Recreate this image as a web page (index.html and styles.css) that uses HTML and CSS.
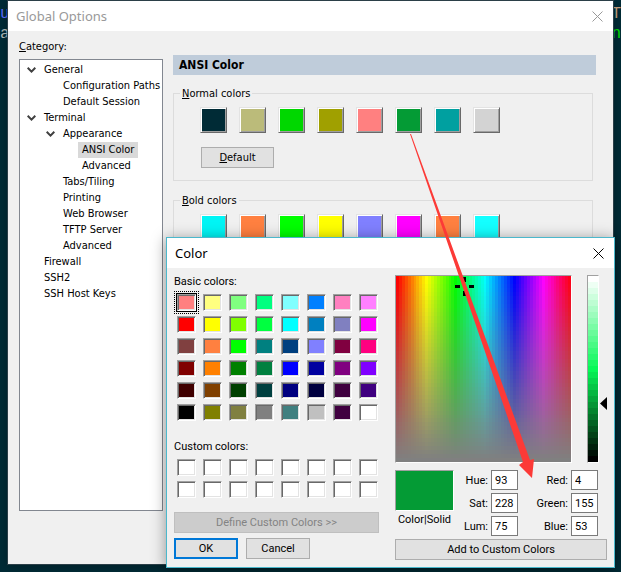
FILE: index.html
```html
<!DOCTYPE html>
<html lang="en">
<head>
    <meta charset="UTF-8">
    <meta name="viewport" content="width=device-width, initial-scale=1.0">
    <title>Global Options</title>
    <link rel="stylesheet" href="styles.css">
</head>
<body>
    <div class="terminal">
        <div class="terminal-line"><span class="blue">u</span><span class="tan">T</span></div>
        <div class="terminal-line"><span class="grey">a</span><span class="green">n</span></div>
    </div>

    <section class="window options">
        <header class="titlebar inactive">
            <h1>Global Options</h1>
            <button class="close" aria-label="Close">
                <svg width="11" height="11" viewBox="0 0 11 11"><path d="M0.5 0.5L10.5 10.5M10.5 0.5L0.5 10.5"/></svg>
            </button>
        </header>
        <div class="options-body">
            <nav class="category">
                <p class="category-label"><u>C</u>ategory:</p>
                <ul class="tree">
                    <li>
                        <div class="row"><button class="toggle" aria-label="Collapse"><svg width="9" height="6" viewBox="0 0 9 6"><path d="M0.7 0.8L4.5 4.6L8.3 0.8"/></svg></button><span>General</span></div>
                        <ul>
                            <li class="row"><span>Configuration Paths</span></li>
                            <li class="row"><span>Default Session</span></li>
                        </ul>
                    </li>
                    <li>
                        <div class="row"><button class="toggle" aria-label="Collapse"><svg width="9" height="6" viewBox="0 0 9 6"><path d="M0.7 0.8L4.5 4.6L8.3 0.8"/></svg></button><span>Terminal</span></div>
                        <ul>
                            <li>
                                <div class="row"><button class="toggle" aria-label="Collapse"><svg width="9" height="6" viewBox="0 0 9 6"><path d="M0.7 0.8L4.5 4.6L8.3 0.8"/></svg></button><span>Appearance</span></div>
                                <ul>
                                    <li class="row"><span class="selected">ANSI Color</span></li>
                                    <li class="row"><span>Advanced</span></li>
                                </ul>
                            </li>
                            <li class="row"><span>Tabs/Tiling</span></li>
                            <li class="row"><span>Printing</span></li>
                            <li class="row"><span>Web Browser</span></li>
                            <li class="row"><span>TFTP Server</span></li>
                            <li class="row"><span>Advanced</span></li>
                        </ul>
                    </li>
                    <li class="row"><span>Firewall</span></li>
                    <li class="row"><span>SSH2</span></li>
                    <li class="row"><span>SSH Host Keys</span></li>
                </ul>
            </nav>
            <div class="panel">
                <h2>ANSI Color</h2>
                <fieldset>
                    <legend><u>N</u>ormal colors</legend>
                    <div class="ansi" id="normalColors"></div>
                    <button class="btn default-btn"><u>D</u>efault</button>
                </fieldset>
                <fieldset>
                    <legend><u>B</u>old colors</legend>
                    <div class="ansi" id="boldColors"></div>
                    <button class="btn default-btn">D<u>e</u>fault</button>
                </fieldset>
            </div>
        </div>
    </section>

    <section class="window picker">
        <header class="titlebar">
            <h1>Color</h1>
            <button class="close" aria-label="Close">
                <svg width="11" height="11" viewBox="0 0 11 11"><path d="M0.5 0.5L10.5 10.5M10.5 0.5L0.5 10.5"/></svg>
            </button>
        </header>
        <div class="picker-body">
            <div class="palettes">
                <h2>Basic colors:</h2>
                <div class="palette basic" id="basicColors"></div>
                <h2>Custom colors:</h2>
                <div class="palette" id="customColors"></div>
                <button class="btn define" disabled>Define Custom Colors &gt;&gt;</button>
                <div class="actions">
                    <button class="btn primary">OK</button>
                    <button class="btn">Cancel</button>
                </div>
            </div>
            <div class="mixer">
                <div class="fields">
                    <div class="spectrum">
                        <canvas id="spectrum" width="60" height="47"></canvas>
                        <svg class="cross" width="19" height="19" viewBox="0 0 19 19"><path d="M8 0h3v5h-3zM8 14h3v5h-3zM0 8h5v3h-5zM14 8h5v3h-5z"/></svg>
                    </div>
                    <canvas id="luminosity" width="1" height="31"></canvas>
                    <svg class="pointer" width="7" height="13" viewBox="0 0 7 13"><path d="M7 0v13L0 6.5z"/></svg>
                </div>
                <div class="values">
                    <div class="preview">
                        <div class="preview-color"></div>
                        <span>Color|Solid</span>
                    </div>
                    <div class="numbers hsl">
                        <label for="hue">Hue:</label><input id="hue" type="text" value="93">
                        <label for="sat">Sat:</label><input id="sat" type="text" value="228">
                        <label for="lum">Lum:</label><input id="lum" type="text" value="75">
                    </div>
                    <div class="numbers rgb">
                        <label for="red">Red:</label><input id="red" type="text" value="4">
                        <label for="green">Green:</label><input id="green" type="text" value="155">
                        <label for="blue">Blue:</label><input id="blue" type="text" value="53">
                    </div>
                </div>
                <button class="btn add">Add to Custom Colors</button>
            </div>
        </div>
    </section>

    <svg class="arrow" width="126" height="344" viewBox="0 0 126 344">
        <path d="M0 0L113 328L109 331L122 344L124 325L120 326L1 0z"/>
    </svg>

    <script>
        const normal = ['#002b36', '#bbbb7a', '#00d700', '#a0a000', '#ff8080', '#049b35', '#00a0a0', '#d3d3d3'];
        const bold = ['#00f5f5', '#ff8040', '#00ff00', '#ffff00', '#8080ff', '#ff00ff', '#ff8040', '#14ffff'];
        const basic = [
            '#ff8080', '#ffff80', '#80ff80', '#00ff80', '#80ffff', '#0080ff', '#ff80c0', '#ff80ff',
            '#ff0000', '#ffff00', '#80ff00', '#00ff40', '#00ffff', '#0080c0', '#8080c0', '#ff00ff',
            '#804040', '#ff8040', '#00ff00', '#008080', '#004080', '#8080ff', '#800040', '#ff0080',
            '#800000', '#ff8000', '#008000', '#008040', '#0000ff', '#0000a0', '#800080', '#8000ff',
            '#400000', '#804000', '#004000', '#004040', '#000080', '#000040', '#400040', '#400080',
            '#000000', '#808000', '#808040', '#808080', '#408080', '#c0c0c0', '#400040', '#ffffff'
        ];
        const custom = new Array(16).fill('#ffffff');

        function fill(id, colors) {
            const box = document.getElementById(id);
            colors.forEach(function(color) {
                const button = document.createElement('button');
                button.className = 'swatch';
                button.style.backgroundColor = color;
                button.setAttribute('aria-label', color);
                box.appendChild(button);
            });
        }

        fill('normalColors', normal);
        fill('boldColors', bold);
        fill('basicColors', basic);
        fill('customColors', custom);
        document.querySelector('#basicColors .swatch').classList.add('current');

        // hue runs left to right, saturation falls from top to bottom
        function drawSpectrum() {
            const canvas = document.getElementById('spectrum');
            const ctx = canvas.getContext('2d');
            for (let x = 0; x < canvas.width; x++) {
                for (let y = 0; y < canvas.height; y++) {
                    const hue = x * 360 / canvas.width;
                    const sat = 100 - y * 100 / (canvas.height - 1);
                    ctx.fillStyle = 'hsl(' + hue + ', ' + sat + '%, 50%)';
                    ctx.fillRect(x, y, 1, 1);
                }
            }
        }

        function drawLuminosity() {
            const canvas = document.getElementById('luminosity');
            const ctx = canvas.getContext('2d');
            for (let y = 0; y < canvas.height; y++) {
                const lum = 100 - y * 100 / (canvas.height - 1);
                ctx.fillStyle = 'hsl(140, 95%, ' + lum + '%)';
                ctx.fillRect(0, y, 1, 1);
            }
        }

        drawSpectrum();
        drawLuminosity();
    </script>
</body>
</html>
```
FILE: styles.css
```css
* {
    margin: 0;
    padding: 0;
    box-sizing: border-box;
}

body {
    position: relative;
    height: 100vh;
    overflow: hidden;
    background-color: #002b36;
    color: #000;
    font-family: "DejaVu Sans Condensed", "DejaVu Sans", sans-serif;
    font-size: 11px;
}

h1, h2 {
    font-weight: normal;
}

ul {
    list-style: none;
}

button, input {
    font: inherit;
    color: inherit;
}

.terminal {
    padding-top: 4px;
    font-family: "Liberation Mono", monospace;
    font-size: 16px;
}

.terminal-line {
    display: flex;
    justify-content: space-between;
    height: 20px;
    line-height: 20px;
}

.blue { color: #5c6cff; }
.tan { color: #c8a080; }
.grey { color: #b0b8b8; }
.green { color: #00e000; }

.window {
    position: absolute;
    display: flex;
    flex-direction: column;
    background-color: #f0f0f0;
}

.titlebar {
    display: flex;
    flex: none;
    justify-content: space-between;
    align-items: center;
    height: 30px;
    padding: 0 10px 0 8px;
    background-color: #fff;
    font-family: "Noto Sans", sans-serif;
}

.titlebar h1 {
    font-size: 13px;
}

.titlebar.inactive {
    color: #999;
}

.close {
    width: 11px;
    height: 11px;
    border: none;
    background: none;
}

.close svg {
    display: block;
    fill: none;
    stroke: currentColor;
}

.btn {
    height: 21px;
    border: 1px solid #adadad;
    background-color: #e1e1e1;
}

/* Global Options */

.options {
    inset: 1px 8px 8px 8px;
    box-shadow: 0 0 0 1px #2b3f48, 0 2px 10px rgba(0, 0, 0, 0.3);
}

.options-body {
    display: flex;
    flex: 1;
    gap: 10px;
    min-height: 0;
    padding: 7px 17px 53px 11px;
}

.category {
    display: flex;
    flex-direction: column;
    flex: none;
    width: 144px;
}

.category-label {
    height: 21px;
    line-height: 18px;
}

.tree {
    flex: 1;
    padding: 2px 0 0 7px;
    border: 1px solid #828790;
    background-color: #fff;
}

.tree ul {
    padding-left: 19px;
}

.row {
    display: flex;
    align-items: center;
    height: 16px;
    padding-left: 13px;
    white-space: nowrap;
}

.row span {
    padding: 0 4px;
    line-height: 16px;
}

.row .selected {
    background-color: #d9d9d9;
}

.toggle {
    width: 9px;
    height: 6px;
    margin: 0 4px 0 -13px;
    border: none;
    background: none;
}

.toggle svg {
    display: block;
    fill: none;
    stroke: #404040;
    stroke-width: 2;
}

.panel {
    flex: 1;
    padding-top: 17px;
}

.panel h2 {
    height: 20px;
    margin-bottom: 10px;
    padding-left: 6px;
    background-color: #bfccda;
    font-size: 12px;
    font-weight: bold;
    line-height: 20px;
}

fieldset {
    height: 96px;
    margin: 0 3px 11px 0;
    padding: 6px 0 0 26px;
    border: 1px solid #dcdcdc;
}

legend {
    height: 16px;
    margin-left: -20px;
    padding: 0 2px;
    line-height: 18px;
}

.ansi {
    display: flex;
    gap: 12px;
    margin-bottom: 14px;
}

.ansi .swatch {
    width: 27px;
    height: 26px;
    border: 1px solid;
    border-color: #e3e3e3 #696969 #696969 #e3e3e3;
    box-shadow: inset 1px 1px #fff, inset -1px -1px #a0a0a0;
}

.default-btn {
    width: 73px;
    margin-left: 1px;
}

/* Color */

.picker {
    inset: 237px 6px 4px 166px;
    border: 1px solid #4bb8cc;
    box-shadow: 0 2px 14px rgba(0, 0, 0, 0.4);
    font-family: Roboto, sans-serif;
    font-size: 11px;
}

.picker-body {
    display: flex;
    flex: 1;
    gap: 16px;
    padding: 7px 7px 6px 7px;
}

.palettes {
    display: flex;
    flex-direction: column;
    flex: none;
    width: 205px;
}

.palettes h2 {
    height: 19px;
    font-size: 11px;
    line-height: 14px;
}

.palette {
    display: grid;
    grid-template-columns: repeat(8, 19px);
    gap: 5px 7px;
    padding-left: 3px;
}

.palette.basic {
    margin-bottom: 19px;
}

.palette .swatch {
    height: 17px;
    border: 1px solid;
    border-color: #a0a0a0 #fff #fff #a0a0a0;
    box-shadow: inset 1px 1px #696969, inset -1px -1px #e3e3e3;
}

.palette .current {
    outline: 1px dotted #000;
    outline-offset: 2px;
    box-shadow: 0 0 0 1px #000, inset 1px 1px #696969, inset -1px -1px #e3e3e3;
}

.define {
    margin: 14px 0 5px;
}

.define:disabled {
    border-color: #bfbfbf;
    background-color: #ccc;
    color: #838383;
}

.actions {
    display: flex;
    gap: 8px;
}

.actions .btn {
    width: 64px;
}

.actions .primary {
    border: 2px solid #0078d7;
}

.mixer {
    display: flex;
    flex-direction: column;
    flex: 1;
}

.fields {
    display: flex;
    height: 188px;
    margin-bottom: 7px;
}

.spectrum {
    position: relative;
    flex: 1;
    margin-right: 15px;
}

canvas {
    display: block;
    height: 188px;
    border: 1px solid;
    border-color: #a0a0a0 #fff #fff #a0a0a0;
    image-rendering: pixelated;
}

#spectrum {
    width: 100%;
}

#luminosity {
    width: 12px;
}

/* marks hue 93, saturation 228 */
.cross {
    position: absolute;
    top: 2px;
    left: 60px;
}

.pointer {
    margin: 122px 0 0 1px;
}

.values {
    display: flex;
    height: 66px;
    margin-bottom: 3px;
    padding-right: 9px;
}

.preview {
    width: 59px;
    text-align: center;
    white-space: nowrap;
}

.preview-color {
    height: 41px;
    margin-bottom: 2px;
    border: 1px solid;
    border-color: #a0a0a0 #fff #fff #a0a0a0;
    background-color: #049b35;
}

.numbers {
    display: grid;
    grid-template-columns: 1fr 27px;
    grid-auto-rows: 20px;
    gap: 3px;
    align-items: center;
    text-align: right;
}

.hsl {
    width: 64px;
}

.rgb {
    width: 70px;
    margin-left: auto;
}

.numbers input {
    width: 27px;
    height: 20px;
    padding: 0 3px;
    border: 1px solid #7a7a7a;
    background-color: #fff;
}

/* from the green swatch to its values */
.arrow {
    position: absolute;
    top: 134px;
    left: 410px;
    fill: #fc3a37;
    pointer-events: none;
}
```
